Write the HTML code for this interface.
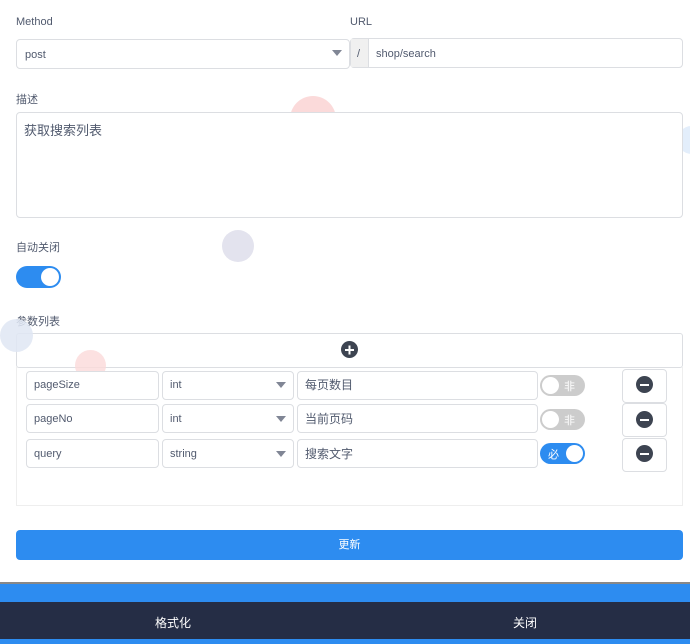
<!DOCTYPE html>
<html><head><meta charset="utf-8"><style>
*{box-sizing:border-box;margin:0;padding:0}
body{width:690px;height:644px;overflow:hidden;background:#fff;font-family:"Liberation Sans","Noto Sans CJK SC",sans-serif;font-size:12px;color:#515a6e;position:relative}
.a{position:absolute}
.lbl{position:absolute;font-size:11px;color:#515a6e}
.box{position:absolute;border:1px solid #dcdee2;border-radius:4px;background:#fff}
.txt{position:absolute;font-size:11px;color:#515a6e;line-height:1}
.circ{position:absolute;border-radius:50%}
.arrow{position:absolute;width:0;height:0;border-left:5px solid transparent;border-right:5px solid transparent;border-top:6px solid #808695}
.tog{position:absolute;width:45px;height:21px;border-radius:11px}
.knob{position:absolute;top:2px;width:17px;height:17px;border-radius:50%;background:#fff}
.dot{position:absolute;width:17px;height:17px;border-radius:50%;background:#3d4451}
.dot i{position:absolute;left:4px;top:7.5px;width:9px;height:2px;background:#fff}
</style></head><body>
<div class="circ" style="left:290px;top:96px;width:46px;height:46px;background:#fbdada"></div>
<div class="circ" style="left:678px;top:126px;width:26px;height:28px;background:#e3eefb"></div>
<div class="circ" style="left:222px;top:230px;width:32px;height:32px;background:#e3e3ee"></div>

<div class="lbl" style="left:16px;top:16px">Method</div>
<div class="lbl" style="left:350px;top:16px">URL</div>
<div class="box" style="left:16px;top:39px;width:334px;height:30px"></div>
<div class="txt" style="left:25px;top:50px">post</div>
<div class="arrow" style="left:332px;top:50px"></div>
<div class="box" style="left:350px;top:38px;width:333px;height:30px"></div>
<div class="a" style="left:351px;top:39px;width:18px;height:28px;background:#f0f0f0;border-right:1px solid #dcdee2"></div>
<div class="txt" style="left:357px;top:49px">/</div>
<div class="txt" style="left:376px;top:49px">shop/search</div>

<div class="lbl" style="left:16px;top:91px">描述</div>
<div class="box" style="left:16px;top:112px;width:667px;height:106px"></div>
<div class="a" style="left:24px;top:120px;font-size:13px;color:#515a6e">获取搜索列表</div>

<div class="lbl" style="left:16px;top:239px">自动关闭</div>
<div class="tog" style="left:16px;top:266px;width:45px;height:22px;background:#2d8cf0"><div class="knob" style="left:25px;top:2px;width:18px;height:18px"></div></div>

<div class="lbl" style="left:16px;top:313px">参数列表</div>
<div class="box" style="left:16px;top:333px;width:667px;height:35px;border-radius:3px"></div>
<div class="circ" style="left:0px;top:319px;width:33px;height:33px;background:#dfe6f3;opacity:.85"></div>
<div class="circ" style="left:75px;top:350px;width:31px;height:31px;background:#fbdada;opacity:.8"></div>
<div class="dot" style="left:341px;top:341px"><i></i><i style="transform:rotate(90deg)"></i></div>
<div class="a" style="left:16px;top:367px;width:667px;height:139px;border:1px solid #eee;border-top:none"></div>

<!-- rows -->
<div class="box" style="left:26px;top:371px;width:133px;height:29px"></div><div class="txt" style="left:34px;top:380px">pageSize</div>
<div class="box" style="left:162px;top:371px;width:132px;height:29px"></div><div class="txt" style="left:170px;top:380px">int</div><div class="arrow" style="left:276px;top:382px"></div>
<div class="box" style="left:297px;top:371px;width:241px;height:29px"></div><div class="txt" style="left:305px;top:379px;font-size:12px">每页数目</div>
<div class="tog" style="left:540px;top:375px;background:#ccc"><div class="knob" style="left:2px"></div><span class="a" style="left:24px;top:3px;color:#fff;font-size:11px">非</span></div>
<div class="box" style="left:622px;top:369px;width:45px;height:34px"></div><div class="dot" style="left:636px;top:376px"><i></i></div>

<div class="box" style="left:26px;top:404px;width:133px;height:29px"></div><div class="txt" style="left:34px;top:414px">pageNo</div>
<div class="box" style="left:162px;top:404px;width:132px;height:29px"></div><div class="txt" style="left:170px;top:414px">int</div><div class="arrow" style="left:276px;top:416px"></div>
<div class="box" style="left:297px;top:404px;width:241px;height:29px"></div><div class="txt" style="left:305px;top:413px;font-size:12px">当前页码</div>
<div class="tog" style="left:540px;top:409px;background:#ccc"><div class="knob" style="left:2px"></div><span class="a" style="left:24px;top:3px;color:#fff;font-size:11px">非</span></div>
<div class="box" style="left:622px;top:403px;width:45px;height:34px"></div><div class="dot" style="left:636px;top:411px"><i></i></div>

<div class="box" style="left:26px;top:439px;width:133px;height:29px"></div><div class="txt" style="left:34px;top:449px">query</div>
<div class="box" style="left:162px;top:439px;width:132px;height:29px"></div><div class="txt" style="left:170px;top:449px">string</div><div class="arrow" style="left:276px;top:451px"></div>
<div class="box" style="left:297px;top:439px;width:241px;height:29px"></div><div class="txt" style="left:305px;top:448px;font-size:12px">搜索文字</div>
<div class="tog" style="left:540px;top:443px;background:#2d8cf0"><div class="knob" style="left:26px"></div><span class="a" style="left:8px;top:3px;color:#fff;font-size:11px">必</span></div>
<div class="box" style="left:622px;top:438px;width:45px;height:34px"></div><div class="dot" style="left:636px;top:445px"><i></i></div>

<div class="a" style="left:16px;top:530px;width:667px;height:30px;background:#2d8cf0;border-radius:4px;color:#fff;text-align:center;line-height:30px;font-size:11px">更新</div>

<div class="a" style="left:0;top:582px;width:690px;height:2px;background:#888"></div>
<div class="a" style="left:0;top:584px;width:690px;height:60px;background:#2d8cf0"></div>
<div class="a" style="left:0;top:602px;width:690px;height:37px;background:#252d45;color:#fff;font-size:12px">
<span class="a" style="left:155px;top:12px">格式化</span><span class="a" style="left:513px;top:12px">关闭</span></div>
</body></html>
